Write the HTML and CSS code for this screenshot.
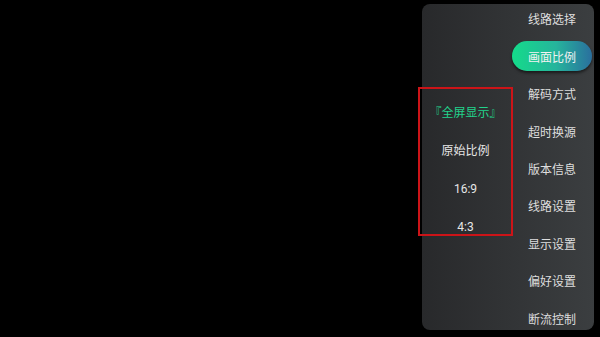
FILE: index.html
```html
<!DOCTYPE html>
<html lang="zh-CN">
<head>
    <meta charset="UTF-8">
    <meta name="viewport" content="width=device-width, initial-scale=1.0">
    <title>设置</title>
    <link rel="stylesheet" href="styles.css">
</head>
<body>
    <main class="panel">
        <div class="sub">
            <div class="sub-item active">『全屏显示』</div>
            <div class="sub-item">原始比例</div>
            <div class="sub-item">16:9</div>
            <div class="sub-item">4:3</div>
        </div>
        <div class="menu">
            <div class="menu-item"><span>线路选择</span></div>
            <div class="menu-item"><span class="pill">画面比例</span></div>
            <div class="menu-item"><span>解码方式</span></div>
            <div class="menu-item"><span>超时换源</span></div>
            <div class="menu-item"><span>版本信息</span></div>
            <div class="menu-item"><span>线路设置</span></div>
            <div class="menu-item"><span>显示设置</span></div>
            <div class="menu-item"><span>偏好设置</span></div>
            <div class="menu-item"><span>断流控制</span></div>
        </div>
    </main>
</body>
</html>
```

FILE: styles.css
```css
html, body {
    margin: 0;
    height: 100%;
    background: #000;
    overflow: hidden;
}
body {
    display: flex;
    font-family: "Roboto", "Noto Sans CJK SC", sans-serif;
    font-size: 12px;
}
.panel {
    display: flex;
    align-items: flex-start;
    width: 172px;
    height: 326px;
    margin: 4px 6px 7px auto;
    border-radius: 8px;
    background: linear-gradient(to right, #28292b, #3b3e40);
}
.sub {
    box-sizing: border-box;
    width: 95px;
    height: 149px;
    margin: 83px 0 0 -4px;
    padding-top: 5px;
    border: 2px solid #cc1418;
}
.sub-item {
    height: 38px;
    line-height: 38px;
    text-align: center;
    color: #e6e6e6;
}
.sub-item.active {
    color: #22d38c;
}
.menu {
    display: flex;
    flex-direction: column;
    width: 80px;
    height: 337px;
    margin: -4px 0 0 -1px;
}
.menu-item {
    flex: 1;
    display: flex;
    align-items: center;
    justify-content: center;
    color: #dedede;
}
.pill {
    display: flex;
    align-items: center;
    justify-content: center;
    width: 80px;
    height: 30px;
    border-radius: 15px;
    color: #f2f2f2;
    background: linear-gradient(to right, #14db8a, #26b49c 55%, #2a6f9e);
    box-shadow: 0 2px 3px rgba(0, 0, 0, 0.55);
}
```
